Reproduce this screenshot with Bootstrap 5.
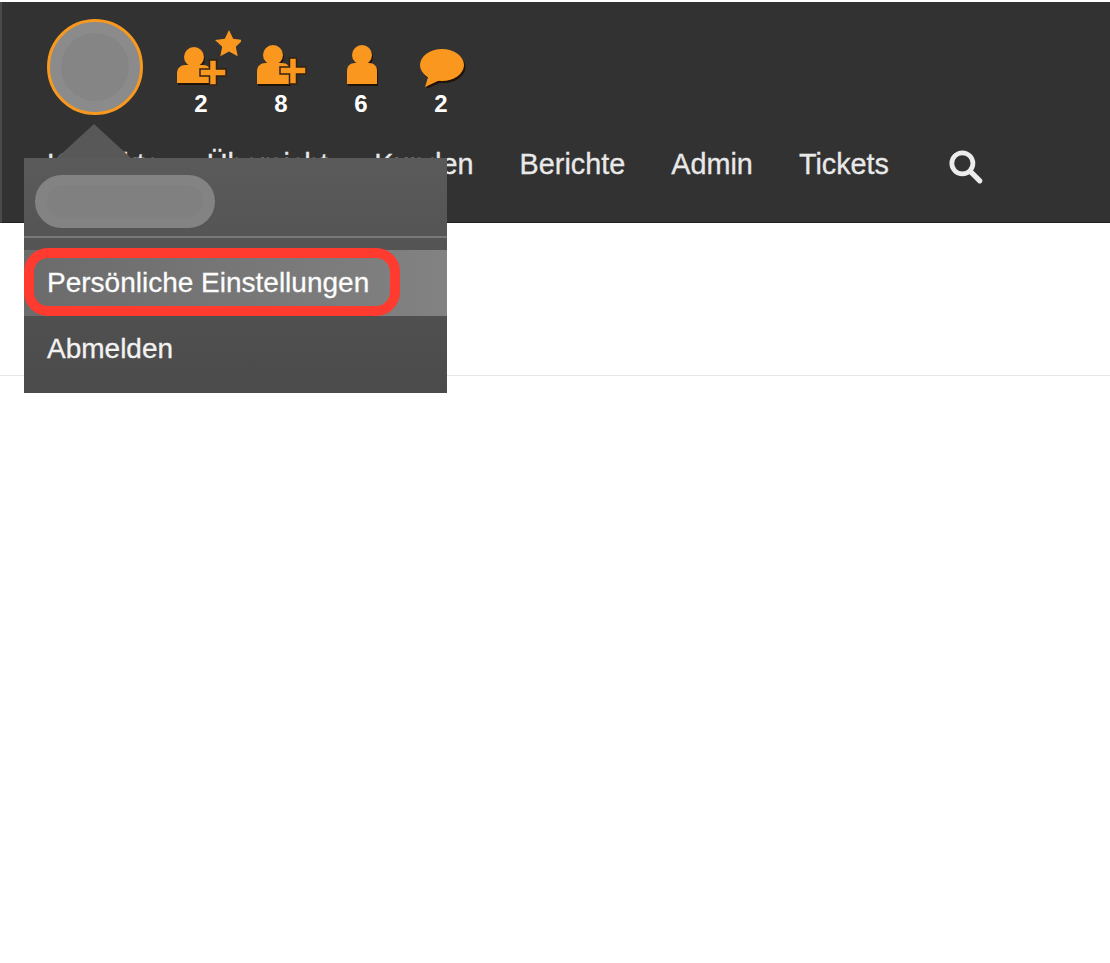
<!DOCTYPE html>
<html lang="de">
<head>
<meta charset="utf-8">
<title>Einstellungen</title>
<link rel="stylesheet" href="https://cdn.jsdelivr.net/npm/bootstrap@5.3.0/dist/css/bootstrap.min.css">
<style>
html,body{height:100%;}
body{background:#fff;font-family:"Liberation Sans",Arial,sans-serif;margin:0;}
.stage{position:relative;height:963px;overflow:hidden;padding-top:2px;background:#fff;}
.topbar{height:221px;background:#323232;border-left:2px solid #4a4a4a;border-bottom:1px solid #222;padding:17px 0 0 45px;}
.avatar-ring{width:96px;height:96px;border-radius:50%;border:3px solid #f7981f;background:#8b8b8b;flex:none;margin-right:18px;}
.avatar-core{width:68px;height:68px;border-radius:50%;background:#858585;}
.counter{width:80px;margin-top:9px;}
.counter svg{display:block;width:80px;height:60px;}
.counter-num{color:#fff;font-size:24px;font-weight:700;line-height:26px;margin-top:3px;}
.mainnav{gap:46px;margin-top:28px;color:#e9e9e9;font-size:28.8px;line-height:32px;white-space:nowrap;-webkit-text-stroke:.3px #e9e9e9;}
.mainnav svg{width:38px;height:38px;margin-left:11px;transform:translateY(2px);}
.subline{height:153px;border-bottom:1px solid #e6e6e6;}
.pop{position:absolute;left:24px;top:158px;width:423px;height:235px;margin:0;padding:0;display:block;border:0;border-radius:0;background:linear-gradient(#5a5a5a,#4b4b4b);}
.pop::before{content:"";position:absolute;left:33px;top:-34px;border-left:37px solid transparent;border-right:37px solid transparent;border-bottom:34px solid #585858;}
.name-pill{width:180px;height:53px;margin:17px 0 0 11px;border-radius:27px;background:#838383;padding:10px 12px;}
.name-pill span{display:block;height:100%;border-radius:16px;background:#808080;}
.pop-rule{height:2px;margin:8px 0 12px;background:#787878;opacity:1;border:0;}
.pop .dropdown-item{height:66px;padding:0 23px;font-size:28px;line-height:66px;color:#f2f2f2;background:transparent;-webkit-text-stroke:.3px #f2f2f2;}
.pop .dropdown-item.is-current{background:linear-gradient(90deg,#6b6b6b,#828282);color:#fff;}
.callout{position:absolute;z-index:1001;left:24px;top:248px;width:376px;height:68px;border:10px solid #ff3b30;border-radius:24px;pointer-events:none;}
</style>
</head>
<body>
<div class="stage">
  <header class="topbar">
    <div class="d-flex align-items-start">
      <div class="avatar-ring d-flex align-items-center justify-content-center"><div class="avatar-core"></div></div>
      <div class="d-flex">
        <div class="counter text-center">
          <svg viewBox="0 0 80 60" aria-hidden="true">
            <g fill="#211407" transform="translate(1,2)"><circle cx="33" cy="29" r="10"/><path d="M16 55v-10c0-5 4-8 8-8h18c5 0 8 3 8 8v10z"/></g>
            <circle cx="33" cy="29" r="10" fill="#f9971f"/>
            <path d="M16 55v-10c0-5 4-8 8-8h18c5 0 8 3 8 8v10z" fill="#f9971f"/>
            <path d="M48.500 32h7v9h9.500v7h-9.500v9h-7v-9H39v-7h9.500z" fill="#f9971f" stroke="#33220f" stroke-width="1.5"/>
            <path d="M68 2l4.200 8.800 9.800 1.200-7.200 6.700 1.900 9.600-8.700-4.800-8.700 4.800 1.900-9.600-7.200-6.700 9.800-1.200z" fill="#f9971f"/>
          </svg>
          <div class="counter-num">2</div>
        </div>
        <div class="counter text-center">
          <svg viewBox="0 0 80 60" aria-hidden="true">
            <g fill="#211407" transform="translate(1,2)"><circle cx="32" cy="27" r="10"/><path d="M16 56v-13c0-5 4-8 8-8h17c5 0 8 3 8 8v13z"/></g>
            <circle cx="32" cy="27" r="10" fill="#f9971f"/>
            <path d="M16 56v-13c0-5 4-8 8-8h17c5 0 8 3 8 8v13z" fill="#f9971f"/>
            <path d="M48.500 30h7v9h9.500v7h-9.500v10h-7V46H39v-7h9.500z" fill="#f9971f" stroke="#33220f" stroke-width="1.5"/>
          </svg>
          <div class="counter-num">8</div>
        </div>
        <div class="counter text-center">
          <svg viewBox="0 0 80 60" aria-hidden="true">
            <g fill="#211407" transform="translate(1,2)"><circle cx="41" cy="27" r="10"/><path d="M26 56V43c0-5 3-8 8-8h14c5 0 8 3 8 8v13z"/></g>
            <circle cx="41" cy="27" r="10" fill="#f9971f"/>
            <path d="M26 56V43c0-5 3-8 8-8h14c5 0 8 3 8 8v13z" fill="#f9971f"/>
          </svg>
          <div class="counter-num">6</div>
        </div>
        <div class="counter text-center">
          <svg viewBox="0 0 80 60" aria-hidden="true">
            <g fill="#211407" transform="translate(1.500,2)"><ellipse cx="41" cy="37" rx="22" ry="16"/><path d="M28 46l-4 13 15-7z"/></g>
            <ellipse cx="41" cy="37" rx="22" ry="16" fill="#f9971f"/>
            <path d="M28 46l-4 13 15-7z" fill="#f9971f"/>
          </svg>
          <div class="counter-num">2</div>
        </div>
      </div>
    </div>
    <nav class="mainnav d-flex align-items-center">
      <span>Kontakte</span><span>Übersicht</span><span>Kunden</span><span>Berichte</span><span>Admin</span><span>Tickets</span>
      <svg viewBox="0 0 36 36" fill="none" stroke="#ececec" aria-label="Suche" role="img"><circle cx="15.500" cy="15.500" r="10" stroke-width="4.500"/><path d="M23 23l9 9" stroke-width="5" stroke-linecap="round"/></svg>
    </nav>
  </header>
  <div class="subline"></div>
  <div class="dropdown-menu show pop">
    <div class="name-pill"><span></span></div>
    <hr class="pop-rule">
    <a class="dropdown-item is-current" href="#">Persönliche Einstellungen</a>
    <a class="dropdown-item" href="#">Abmelden</a>
  </div>
  <div class="callout"></div>
</div>
<script src="https://cdn.jsdelivr.net/npm/bootstrap@5.3.0/dist/js/bootstrap.bundle.min.js"></script>
</body>
</html>
